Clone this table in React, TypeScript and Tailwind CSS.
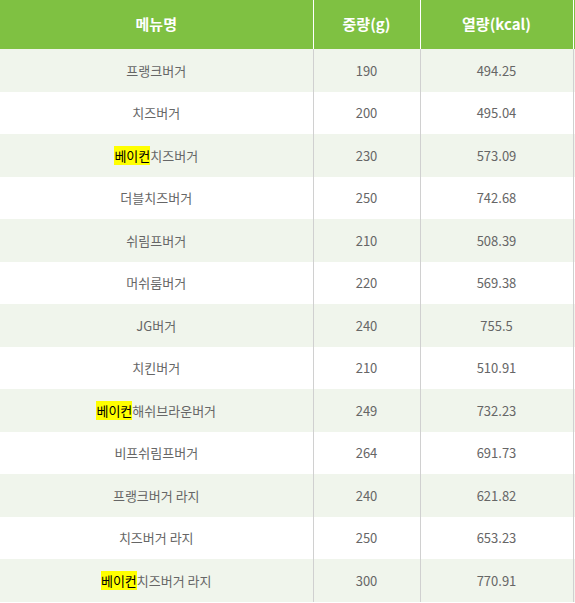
import React from "react";

const ROWS: { name: string; bacon?: boolean; weight: number; kcal: string }[] = [
  { name: "프랭크버거", weight: 190, kcal: "494.25" },
  { name: "치즈버거", weight: 200, kcal: "495.04" },
  { name: "치즈버거", bacon: true, weight: 230, kcal: "573.09" },
  { name: "더블치즈버거", weight: 250, kcal: "742.68" },
  { name: "쉬림프버거", weight: 210, kcal: "508.39" },
  { name: "머쉬룸버거", weight: 220, kcal: "569.38" },
  { name: "JG버거", weight: 240, kcal: "755.5" },
  { name: "치킨버거", weight: 210, kcal: "510.91" },
  { name: "해쉬브라운버거", bacon: true, weight: 249, kcal: "732.23" },
  { name: "비프쉬림프버거", weight: 264, kcal: "691.73" },
  { name: "프랭크버거 라지", weight: 240, kcal: "621.82" },
  { name: "치즈버거 라지", weight: 250, kcal: "653.23" },
  { name: "치즈버거 라지", bacon: true, weight: 300, kcal: "770.91" },
];

export default function App() {
  return (
    <div className="w-[575px] h-[603px] overflow-hidden bg-white font-['Noto_Sans_CJK_KR','Noto_Sans',sans-serif]">
      <table className="w-[700px] border-collapse table-fixed">
        <colgroup>
          <col className="w-[313px]" />
          <col className="w-[107px]" />
          <col className="w-[153px]" />
          <col />
        </colgroup>
        <thead>
          <tr className="h-[49px] bg-[#7fc142] text-white text-[15px] font-bold">
            <th className="border-r border-white">메뉴명</th>
            <th className="border-r border-white">중량(g)</th>
            <th className="border-r border-white">열량(kcal)</th>
            <th></th>
          </tr>
        </thead>
        <tbody className="text-[13px] text-[#666]">
          {ROWS.map((r, i) => (
            <tr key={i} className={`h-[42.54px] ${i % 2 === 0 ? "bg-[#f0f5ec]" : "bg-white"}`}>
              <td className="border-r border-[#d0d0d0] text-center">
                {r.bacon && <span className="bg-[#ffff00] text-black">베이컨</span>}
                {r.name}
              </td>
              <td className="border-r border-[#d0d0d0] text-center">{r.weight}</td>
              <td className="border-r border-[#d0d0d0] text-center">{r.kcal}</td>
              <td></td>
            </tr>
          ))}
        </tbody>
      </table>
    </div>
  );
}
